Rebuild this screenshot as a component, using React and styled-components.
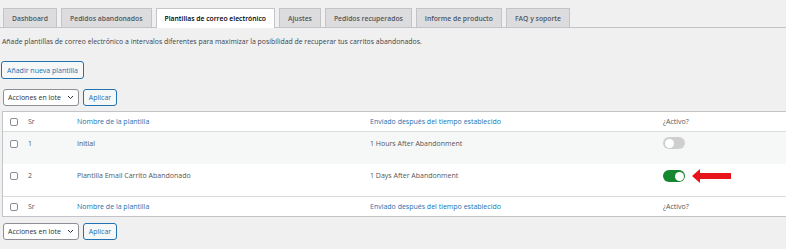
import React from 'react'
import styled, { createGlobalStyle } from 'styled-components'

const Global = createGlobalStyle`
  html, body { margin: 0; padding: 0; background: #f0f0f1; }
  body { font-family: "Open Sans", "Noto Sans", sans-serif; color: #3c434a; font-size: 7px; }
`

const Page = styled.div`
  width: 786px;
  height: 249px;
  overflow: hidden;
  padding-top: 8px;
  box-sizing: border-box;
`

const TabBar = styled.div`
  display: flex;
  gap: 4px;
  padding-left: 3px;
  border-bottom: 1px solid #c3c4c7;
  height: 19px;
`

const Tab = styled.div`
  display: flex;
  align-items: center;
  padding: 0 8px;
  font-size: 6.8px;
  font-weight: 600;
  color: ${p => (p.$active ? '#000' : '#50575e')};
  background: ${p => (p.$active ? '#fff' : '#dcdcde')};
  border: 1px solid #c3c4c7;
  border-bottom: none;
  margin-bottom: ${p => (p.$active ? '-1px' : '0')};
`

const Intro = styled.p`
  margin: 9px 0 0 2px;
  font-size: 6.9px;
  line-height: 10px;
  color: #3c434a;
`

const AddButton = styled.button`
  display: block;
  margin: 14px 0 0 1px;
  height: 18px;
  padding: 0 5px;
  font-family: inherit;
  font-size: 7px;
  color: #2271b1;
  background: #f6f7f7;
  border: 1px solid #2271b1;
  border-radius: 3px;
`

const Actions = styled.div`
  display: flex;
  gap: 4px;
  margin: ${p => p.$top}px 0 0 3px;
`

const Select = styled.div`
  display: flex;
  align-items: center;
  justify-content: space-between;
  width: 76px;
  height: 17px;
  box-sizing: border-box;
  padding: 0 4px 0 4px;
  background: #fff;
  border: 1px solid #8c8f94;
  border-radius: 3px;
  font-size: 7px;
  color: #2c3338;
`

const ApplyButton = styled.button`
  height: 17px;
  width: 34px;
  padding: 0;
  font-family: inherit;
  font-size: 7px;
  color: #2271b1;
  background: #f6f7f7;
  border: 1px solid #2271b1;
  border-radius: 3px;
`

const Table = styled.div`
  margin: 5px 0 0 2px;
  background: #fff;
  border: 1px solid #c3c4c7;
  border-right: none;
`

const Row = styled.div`
  display: grid;
  grid-template-columns: 18px 49px 293px 293px 1fr;
  align-items: ${p => (p.$head ? 'center' : 'start')};
  padding: ${p => (p.$head ? '0' : '7px')} 0 0 7px;
  height: ${p => (p.$head ? '20px' : '32px')};
  box-sizing: border-box;
  background: ${p => (p.$alt ? '#f6f7f7' : '#fff')};
  border-top: ${p => (p.$foot ? '1px solid #dcdcde' : 'none')};
  border-bottom: ${p => (p.$head && !p.$foot ? '1px solid #dcdcde' : 'none')};
  font-size: 7px;
  line-height: 10px;
`

const Check = styled.span`
  display: block;
  width: 8px;
  height: 8px;
  margin-top: ${p => (p.$body ? '1px' : '0')};
  border: 1px solid #8c8f94;
  border-radius: 2px;
  background: #fff;
  box-sizing: border-box;
`

const Cell = styled.span`
  color: ${p => (p.$link ? '#2271b1' : '#555759')};
  white-space: nowrap;
`

const StatusCell = styled.div`
  display: flex;
  align-items: center;
  gap: 7px;
  margin-top: -2px;
`

const Toggle = styled.span`
  position: relative;
  display: block;
  width: 22px;
  height: 12px;
  border-radius: 6px;
  background: ${p => (p.$on ? '#15872e' : '#cfcfcf')};
  &::after {
    content: '';
    position: absolute;
    top: 1.5px;
    left: ${p => (p.$on ? '11.5px' : '1.5px')};
    width: 9px;
    height: 9px;
    border-radius: 50%;
    background: #fff;
  }
`

const Chevron = () => (
  <svg width="7" height="5" viewBox="0 0 7 5">
    <path d="M1 1l2.5 2.5L6 1" fill="none" stroke="#2c3338" strokeWidth="1" />
  </svg>
)

const Arrow = () => (
  <svg width="39" height="14" viewBox="0 0 39 14">
    <path d="M0 7L8 0v4h31v6H8v4z" fill="#e8141b" />
  </svg>
)

const tabs = [
  'Dashboard',
  'Pedidos abandonados',
  'Plantillas de correo electrónico',
  'Ajustes',
  'Pedidos recuperados',
  'Informe de producto',
  'FAQ y soporte',
]

const rows = [
  { sr: '1', name: 'Initial', time: '1 Hours After Abandonment', on: false },
  { sr: '2', name: 'Plantilla Email Carrito Abandonado', time: '1 Days After Abandonment', on: true },
]

const HeadRow = ({ foot }) => (
  <Row $head $foot={foot}>
    <Check />
    <Cell>Sr</Cell>
    <Cell $link>Nombre de la plantilla</Cell>
    <Cell $link>Enviado después del tiempo establecido</Cell>
    <Cell>¿Activo?</Cell>
  </Row>
)

const BulkActions = ({ top }) => (
  <Actions $top={top}>
    <Select>
      Acciones en lote
      <Chevron />
    </Select>
    <ApplyButton>Aplicar</ApplyButton>
  </Actions>
)

export default function App() {
  return (
    <Page>
      <Global />
      <TabBar>
        {tabs.map((t, i) => (
          <Tab key={t} $active={i === 2}>{t}</Tab>
        ))}
      </TabBar>
      <Intro>
        Añade plantillas de correo electrónico a intervalos diferentes para maximizar la posibilidad de recuperar tus carritos abandonados.
      </Intro>
      <AddButton>Añadir nueva plantilla</AddButton>
      <BulkActions top={10} />
      <Table>
        <HeadRow />
        {rows.map((r, i) => (
          <Row key={r.sr} $alt={i === 0}>
            <Check $body />
            <Cell>{r.sr}</Cell>
            <Cell>{r.name}</Cell>
            <Cell>{r.time}</Cell>
            <StatusCell>
              <Toggle $on={r.on} />
              {r.on && <Arrow />}
            </StatusCell>
          </Row>
        ))}
        <HeadRow foot />
      </Table>
      <BulkActions top={6} />
    </Page>
  )
}
